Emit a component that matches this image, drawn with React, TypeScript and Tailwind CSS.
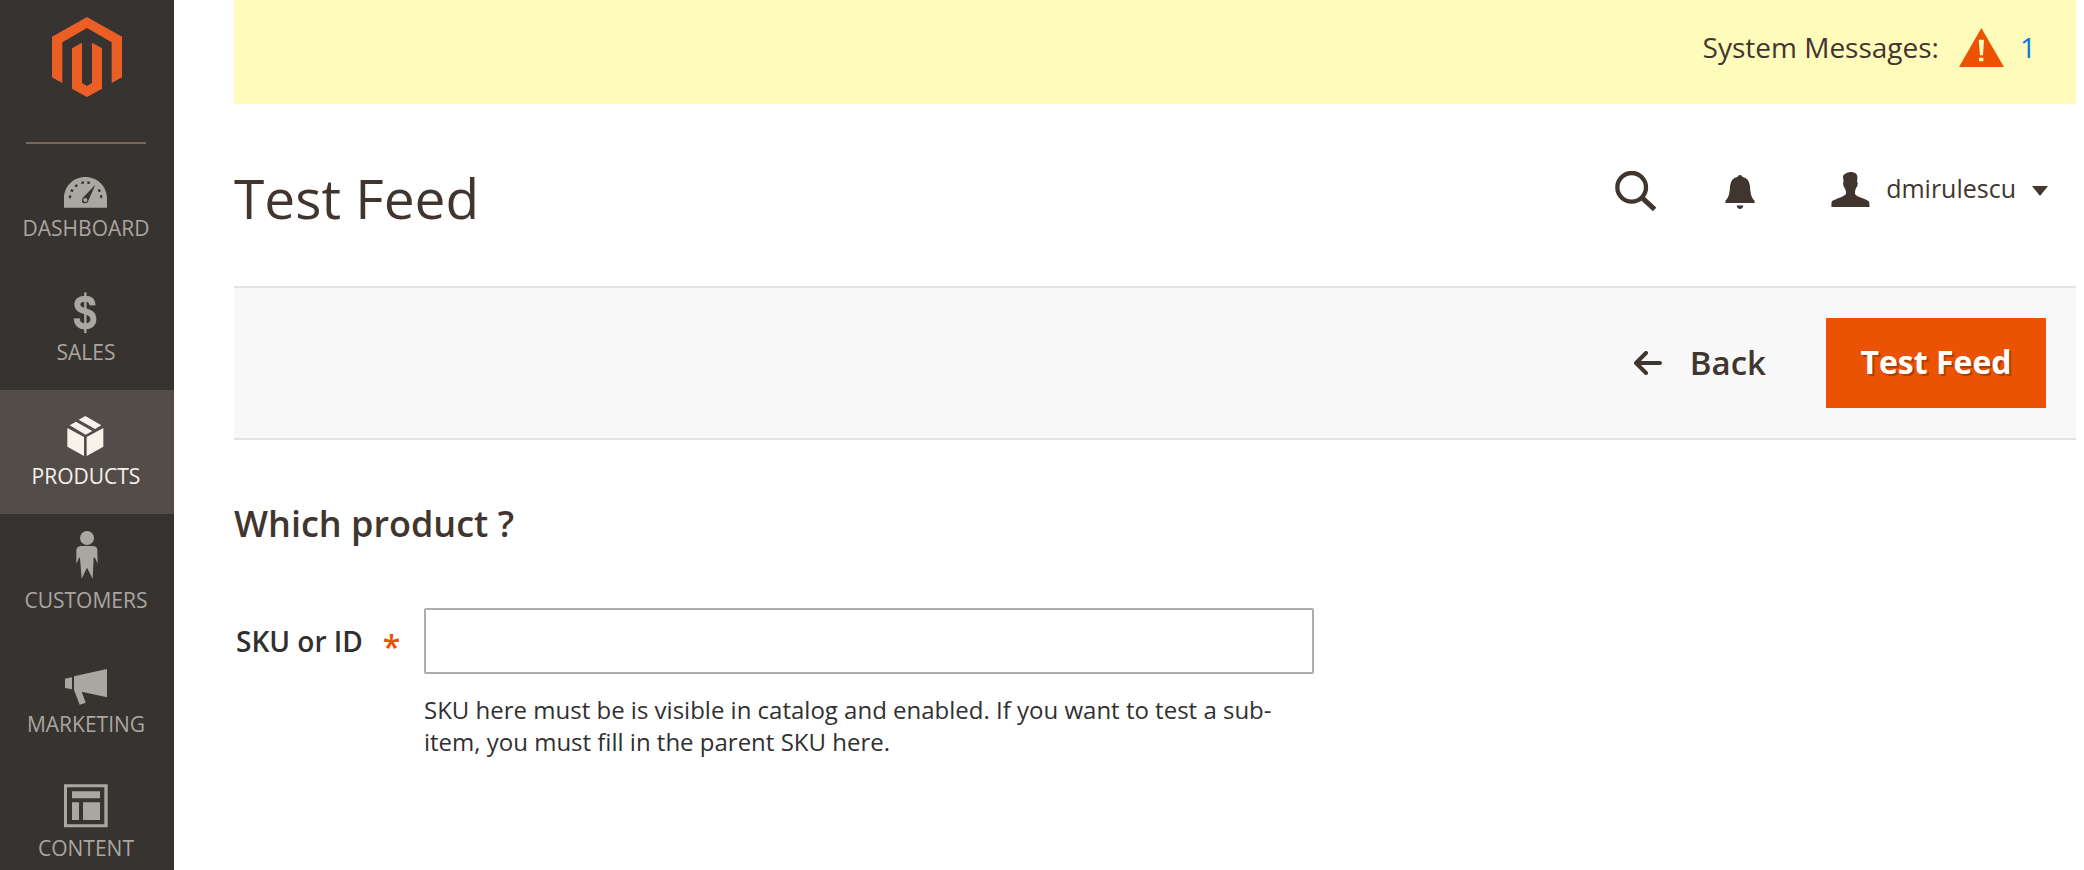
import { clsx } from "clsx";

interface MenuIconProps {
  children: React.ReactNode;
}

// All menu glyphs are drawn on the same 132x180 grid.
function MenuIcon({ children }: MenuIconProps) {
  return (
    <svg width="44" height="60" viewBox="0 0 132 180" fill="currentColor" aria-hidden="true">
      {children}
    </svg>
  );
}

function LogoIcon() {
  return (
    <svg width="70" height="80" viewBox="156 51 210 240" fill="#eb5f24" aria-hidden="true">
      <path d="M261 51 366 110V232L335 249V127L261 84 187 127V249L156 232V110Z" />
      <path d="M216 145 246 128V249L261 258 276 249V128L306 145V266L261 291 216 266Z" />
    </svg>
  );
}

function DashboardIcon() {
  return (
    <MenuIcon>
      <g transform="translate(0 69)">
        <path
          fillRule="evenodd"
          d="M0 92V64C0 28 28 0 64 0S129 28 129 64V92ZM94 23 55 64 54 76 60 79 69 78 75 67ZM16 54 22 56 21 64 14 63ZM22 36 29 39 26 46 19 43ZM36 22 42 24 38 31 31 28ZM52 14 60 13 59 20 52 21ZM70 13 78 14 77 21 70 20ZM101 38 107 36 111 43 104 46ZM108 55 114 54 115 63 109 64Z"
        />
        <circle cx="64" cy="69" r="6" />
      </g>
    </MenuIcon>
  );
}

function SalesIcon() {
  return (
    <MenuIcon>
      <g transform="translate(28 43)" fill="none" stroke="currentColor">
        <path d="M36 0V122" strokeWidth="7" />
        <path
          d="M58 39C57 24 49 19 36 19 21 19 12 25 12 36 12 64 60 48 60 81 60 95 50 102 36 102 19 102 11 94 10 78"
          strokeWidth="18"
        />
      </g>
    </MenuIcon>
  );
}

function ProductsIcon() {
  return (
    <MenuIcon>
      <path
        transform="translate(10 42)"
        d="M0 36 50 63V120L0 92ZM58 63 108 36V92L58 120ZM7 28 26 17 75 45 55 56ZM34 11 54 0 102 28 83 39Z"
      />
    </MenuIcon>
  );
}

function CustomersIcon() {
  return (
    <MenuIcon>
      <g transform="translate(36 15)">
        <circle cx="33" cy="21" r="21" />
        <path d="M14 45H52Q64 46 64 58L65 99 57 80 53 80 50 143 33 110 17 143 12 80 9 80 1 99V58Q2 46 14 45Z" />
      </g>
    </MenuIcon>
  );
}

function MarketingIcon() {
  return (
    <MenuIcon>
      <path
        transform="translate(3 57)"
        d="M0 29 21 25V61L0 57ZM27 22 126 0V85L50 68 62 101 44 107 27 63Z"
      />
    </MenuIcon>
  );
}

function ContentIcon() {
  return (
    <MenuIcon>
      <g transform="translate(0 31)">
        <path fillRule="evenodd" d="M0 0H131V129H0ZM9 9V120H121V9Z" />
        <path d="M24 21H108V42H24ZM24 54H45V107H24ZM57 54H108V107H57Z" />
      </g>
    </MenuIcon>
  );
}

const MENU = [
  { label: "Dashboard", Icon: DashboardIcon },
  { label: "Sales", Icon: SalesIcon },
  { label: "Products", Icon: ProductsIcon, active: true },
  { label: "Customers", Icon: CustomersIcon },
  { label: "Marketing", Icon: MarketingIcon },
  { label: "Content", Icon: ContentIcon },
];

function Sidebar() {
  return (
    <aside className="w-[174px] shrink-0 bg-[#373330]">
      <a href="#" aria-label="Magento" className="flex h-[142px] justify-center pt-[17px]">
        <LogoIcon />
      </a>
      <div className="mx-[26px] -mb-0.5 h-0.5 w-[120px] bg-[#736963]" />
      <nav>
        {MENU.map(({ label, Icon, active }) => (
          <a
            key={label}
            href="#"
            className={clsx(
              "flex h-[124px] flex-col items-center pt-3 pr-0.5 text-[21px] leading-7 uppercase",
              active ? "bg-[#524d49] text-[#f7f3eb]" : "text-[#aaa6a0]"
            )}
          >
            <Icon />
            {label}
          </a>
        ))}
      </nav>
    </aside>
  );
}

function SystemMessages() {
  return (
    <div className="flex h-[104px] items-center justify-end bg-[#fffbbb] pr-10 pb-[10px] text-[28px]">
      <span>System Messages:</span>
      <svg className="ml-5" width="45" height="39" viewBox="0 0 135 117" aria-hidden="true">
        <path d="M67 0 135 117H0Z" fill="#eb5202" />
        <path d="M59 35H75L72 82H63ZM60 89H73V100H60Z" fill="#fffbbb" />
      </svg>
      <a href="#" className="ml-4 text-[#007bdb]">
        1
      </a>
    </div>
  );
}

function PageHeader() {
  return (
    <header className="flex h-[182px] items-start justify-between pr-7">
      <h1 className="pt-14 text-[55px] leading-[76px]">Test Feed</h1>
      <div className="flex h-[174px] items-center">
        <button type="button" aria-label="Search">
          <svg width="41" height="41" viewBox="0 0 123 121" fill="none" stroke="currentColor" aria-hidden="true">
            <circle cx="50" cy="48" r="43" strokeWidth="13" />
            <path d="M80 78 119 114" strokeWidth="15" />
          </svg>
        </button>
        <button type="button" aria-label="Notifications" className="ml-[69px] pt-0.5">
          <svg width="30" height="34" viewBox="0 0 88 100" fill="currentColor" aria-hidden="true">
            <path d="M37 5Q38 0 44 0T51 5Q71 10 73 31C75 51 75 64 87 76V82H1V76C13 64 13 51 15 31Q17 10 37 5ZM34 90H54Q52 100 44 100T34 90Z" />
          </svg>
        </button>
        <button type="button" className="ml-[76px] flex items-center text-[25px]">
          <span className="flex items-center pb-1">
            <svg width="39" height="35" viewBox="0 0 115 104" fill="currentColor" aria-hidden="true">
              <path d="M57 0C71 0 79 6 78 18L77 29Q81 31 78 40 77 46 74 47L71 57V65C77 75 101 78 111 86Q114 89 114 104H1Q0 89 3 86C13 79 38 74 44 65V57L40 47Q37 46 36 38 34 31 37 29L35 14Q36 7 42 5 48 0 57 0Z" />
            </svg>
            <span className="ml-4">dmirulescu</span>
          </span>
          <svg className="ml-4" width="16" height="10" viewBox="0 0 16 10" fill="currentColor" aria-hidden="true">
            <path d="M0 0H16L8 10Z" />
          </svg>
        </button>
      </div>
    </header>
  );
}

function Toolbar() {
  return (
    <div className="flex items-center justify-end border-y-2 border-[#e3e3e3] bg-[#f8f8f8] p-[30px]">
      <button type="button" className="flex items-center text-[33px] font-semibold">
        <svg
          width="28"
          height="24"
          viewBox="0 0 28 24"
          fill="none"
          stroke="currentColor"
          strokeWidth="4"
          strokeLinecap="round"
          strokeLinejoin="round"
          aria-hidden="true"
        >
          <path d="M12 2 2 12 12 22M2 12H26" />
        </svg>
        <span className="ml-7">Back</span>
      </button>
      <button
        type="button"
        className="ml-[60px] h-[90px] w-[220px] bg-[#eb5202] pb-0.5 text-[32px] font-bold text-white [text-shadow:2px_2px_0_rgba(0,0,0,0.25)]"
      >
        Test Feed
      </button>
    </div>
  );
}

function ProductForm() {
  return (
    <form className="pt-[60px]">
      <h2 className="text-[36px] leading-[48px] font-semibold">Which product ?</h2>
      <div className="mt-[60px] flex items-start text-[#303030]">
        <label
          htmlFor="sku"
          className="flex w-[190px] shrink-0 items-center pl-0.5 text-[28px] leading-[66px] font-semibold"
        >
          SKU or ID
          <span className="ml-5 h-[66px] pt-1.5 text-[32px] text-[#eb5202]">*</span>
        </label>
        <div className="w-full max-w-[890px]">
          <input
            id="sku"
            type="text"
            required
            aria-describedby="sku-note"
            className="block h-[66px] w-full rounded-xs border-2 border-[#adadad] bg-white px-4 text-[28px] outline-none"
          />
          <p id="sku-note" className="mt-5 text-[24px] leading-8">
            SKU here must be is visible in catalog and enabled. If you want to test a sub-item, you must fill in the
            parent SKU here.
          </p>
        </div>
      </div>
    </form>
  );
}

export default function App() {
  return (
    <div className="flex h-screen overflow-hidden bg-white font-['Open_Sans',sans-serif] text-[#41362f]">
      <Sidebar />
      <main className="min-w-0 flex-1 pr-2 pl-[60px]">
        <SystemMessages />
        <PageHeader />
        <Toolbar />
        <ProductForm />
      </main>
    </div>
  );
}
